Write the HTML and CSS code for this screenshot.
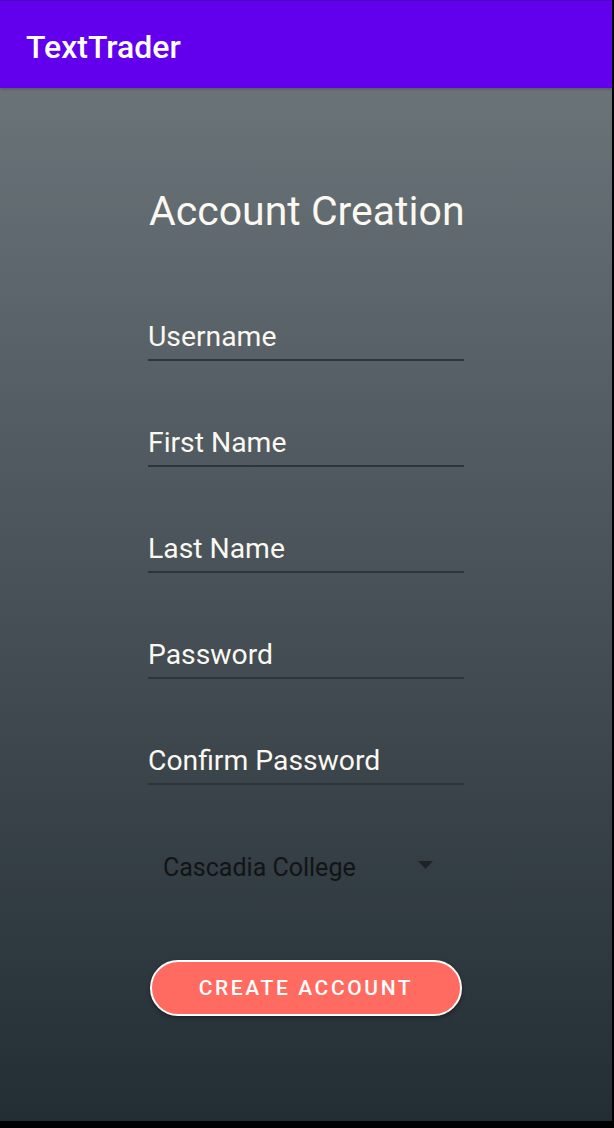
FILE: index.html
```html
<!DOCTYPE html>
<html>
<head>
<meta charset="utf-8">
<link rel="stylesheet" href="styles.css">
</head>
<body>
<div class="screen">
  <header class="appbar"><span class="app-title">TextTrader</span></header>
  <main class="content">
    <h1 class="heading">Account Creation</h1>
    <div class="field"><span class="label">Username</span></div>
    <div class="field"><span class="label">First Name</span></div>
    <div class="field"><span class="label">Last Name</span></div>
    <div class="field"><span class="label">Password</span></div>
    <div class="field"><span class="label">Confirm Password</span></div>
    <div class="spinner">
      <span class="spinner-text">Cascadia College</span>
      <svg class="spinner-arrow" width="15" height="8" viewBox="0 0 15 8"><path d="M0 0 L15 0 L7.5 8 Z" fill="#1f2326"/></svg>
    </div>
    <button class="btn">CREATE ACCOUNT</button>
  </main>
</div>
</body>
</html>
```

FILE: styles.css
```css
html, body {
  margin: 0;
  padding: 0;
  background: #000;
}
body {
  width: 614px;
  height: 1128px;
  overflow: hidden;
  font-family: Roboto, "Liberation Sans", sans-serif;
}
.screen {
  width: 612px;
  height: 1121px;
  display: flex;
  flex-direction: column;
  background: linear-gradient(#6f797e, #232d34);
}
.appbar {
  height: 87px;
  border-top: 1px solid #4c00c0;
  background: #6200ee;
  display: flex;
  align-items: center;
  padding-left: 26px;
  box-shadow: 0 1px 3px rgba(0,0,0,0.25);
}
.app-title {
  color: #fff;
  font-size: 32px;
  font-weight: 500;
  margin-top: 4px;
}
.content {
  width: 316px;
  margin: 0 auto;
  display: flex;
  flex-direction: column;
}
.heading {
  margin: 99px 0 0 1px;
  font-size: 41px;
  font-weight: 400;
  color: #fbf8f0;
  line-height: 48px;
  white-space: nowrap;
}
.field {
  height: 50px;
  margin-top: 54px;
  border-bottom: 2px solid #2d353a;
  display: flex;
  align-items: flex-end;
}
.field:first-of-type {
  margin-top: 74px;
}
.label {
  color: #fbf8f0;
  font-size: 28.3px;
  line-height: 36px;
  padding-bottom: 4px;
  white-space: nowrap;
}
.spinner {
  margin-top: 60px;
  height: 44px;
  display: flex;
  align-items: center;
  padding: 0 31px 0 15px;
  justify-content: space-between;
}
.spinner-text {
  font-size: 25px;
  color: #121416;
}
.spinner-arrow {
  display: block;
  margin-top: -4px;
}
.btn {
  margin: 71px auto 0;
  width: 312px;
  height: 56px;
  border-radius: 28px;
  background: #ff6b61;
  border: 2px solid #fff;
  color: #fff;
  font-family: Roboto, "Liberation Sans", sans-serif;
  font-size: 21px;
  font-weight: 500;
  letter-spacing: 2.6px;
  box-shadow: 0 2px 4px rgba(0,0,0,0.35);
  padding: 0;
}
```
